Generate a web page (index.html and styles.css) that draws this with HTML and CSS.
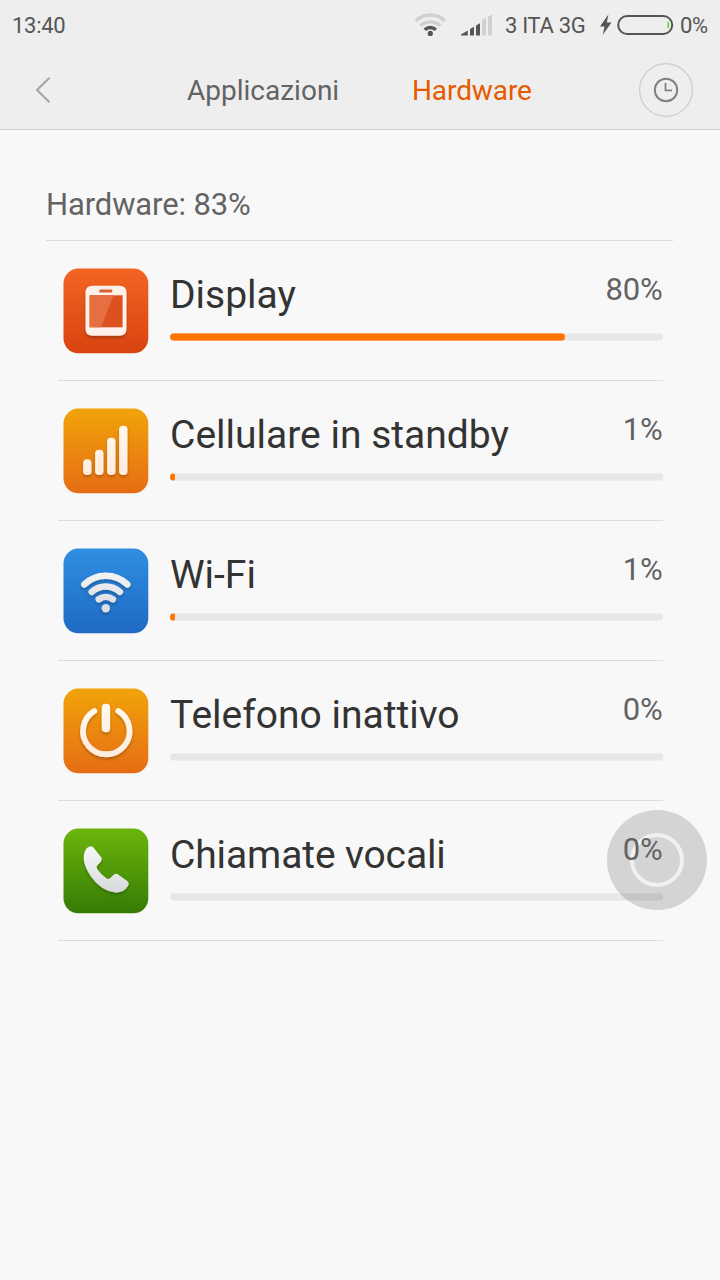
FILE: index.html
```html
<!DOCTYPE html>
<html lang="it">
<head>
<meta charset="utf-8">
<title>Hardware</title>
<link rel="stylesheet" href="styles.css">
</head>
<body>
<svg class="defs" width="0" height="0" aria-hidden="true">
  <defs>
    <linearGradient id="red" x2="0" y2="1"><stop stop-color="#f26522"/><stop offset="1" stop-color="#d84310"/></linearGradient>
    <linearGradient id="amber" x2="0" y2="1"><stop stop-color="#f2a30a"/><stop offset="1" stop-color="#e56d14"/></linearGradient>
    <linearGradient id="blue" x2="0" y2="1"><stop stop-color="#2f8fe2"/><stop offset="1" stop-color="#1e69c4"/></linearGradient>
    <linearGradient id="green" x2="0" y2="1"><stop stop-color="#6bb50c"/><stop offset="1" stop-color="#357c04"/></linearGradient>
    <linearGradient id="silver" gradientUnits="userSpaceOnUse" x1="0" y1="18" x2="0" y2="66"><stop stop-color="#f8f8f8"/><stop offset="1" stop-color="#d6d8da"/></linearGradient>
    <linearGradient id="cream" gradientUnits="userSpaceOnUse" x1="0" y1="15" x2="0" y2="70"><stop stop-color="#fff8f0"/><stop offset="1" stop-color="#fdebdc"/></linearGradient>
    <filter id="shadow" x="-20%" y="-20%" width="140%" height="150%"><feDropShadow dx="0" dy="2" stdDeviation="1.6" flood-color="#000" flood-opacity=".25"/></filter>
  </defs>
</svg>
<header class="top">
  <div class="status">
    <span class="time">13:40</span>
    <svg class="wifi" width="34" height="26" viewBox="0 0 34 26" fill="none" stroke-width="3.4">
      <path d="M1.8 9.8a21 21 0 0 1 29 0" stroke="#d0d0d0"/>
      <path d="M6.3 14.8a14.6 14.6 0 0 1 20 0" stroke="#d0d0d0"/>
      <path d="M10.7 18.7a8.4 8.4 0 0 1 11.2 0" stroke="#555"/>
      <circle cx="16.3" cy="22.4" r="2.6" fill="#555"/>
    </svg>
    <svg class="signal" width="32" height="22" viewBox="0 0 32 22">
      <path d="M0 21.5V20.5l6.8-4v5zM9 15l4-2.3v8.8H9zM15 11.6l4-2.4v12.3h-4z" fill="#555"/>
      <path d="M21 6.2l4-2.4v17.7h-4zM27 2.800l4-2.300v21h-4z" fill="#d0d0d0"/>
    </svg>
    <span class="carrier">3 ITA 3G</span>
    <svg class="battery" width="74" height="22" viewBox="0 0 74 22">
      <path d="M8.400.500L0 12.500h4.500L2.800 20.800 11.500 8.500H6.800z" fill="#555"/>
      <rect x="18.200" y="2" width="54" height="18" rx="9" fill="none" stroke="#555" stroke-width="2"/>
      <path d="M68.500 7.800q1.400 3.200 0 6.400h-1V8z" fill="#4fd41c"/>
    </svg>
    <span class="charge">0%</span>
  </div>
  <nav class="bar">
    <svg class="back" width="16" height="26" viewBox="0 0 16 26"><path d="M13.800 1.500L2 13l11.800 11.500" fill="none" stroke="#a6a6a6" stroke-width="2.200" stroke-linecap="round" stroke-linejoin="round"/></svg>
    <span class="tab tab-apps">Applicazioni</span>
    <span class="tab tab-hw">Hardware</span>
    <svg class="history" width="54" height="54" viewBox="0 0 54 54" fill="none">
      <circle cx="27" cy="27" r="26.400" stroke="#ccc" stroke-width="1.200"/>
      <circle cx="27" cy="27" r="11.200" stroke="#808080" stroke-width="2"/>
      <path d="M26.500 20v7.300H33" stroke="#808080" stroke-width="1.800"/>
    </svg>
  </nav>
</header>
<main class="content">
  <h1 class="heading">Hardware: 83%</h1>
  <ul class="list">
    <li class="row">
      <svg class="icon" viewBox="0 0 86 86"><rect x=".5" y=".5" width="84.800" height="84.800" rx="15" fill="url(#red)"/>
        <g filter="url(#shadow)"><path d="M29.500 17.700h27q7 0 7 7v36q0 7-7 7h-27q-7 0-7-7v-36q0-7 7-7z" fill="#fff1ea"/></g>
        <rect x="36.300" y="21.500" width="13" height="3" rx="1" fill="#d9602f"/>
        <rect x="26.600" y="27.300" width="33" height="32" fill="#dc511d"/>
        <path d="M26.600 27.300h24L38.100 59.300H26.600z" fill="#e66f42"/></svg>
      <div class="info"><div class="line"><span class="name">Display</span><span class="pct">80%</span></div><div class="track"><div class="fill" style="width:80.2%"></div></div></div>
    </li>
    <li class="row">
      <svg class="icon" viewBox="0 0 86 86"><rect x=".5" y=".5" width="84.800" height="84.800" rx="15" fill="url(#amber)"/>
        <g filter="url(#shadow)" fill="url(#cream)"><rect x="20.100" y="51.300" width="8.400" height="15.700" rx="3.800"/><rect x="32.100" y="41.800" width="8.400" height="25.200" rx="3.800"/><rect x="44.100" y="29.800" width="8.400" height="37.200" rx="3.800"/><rect x="56.100" y="17.800" width="8.400" height="49.200" rx="3.800"/></g></svg>
      <div class="info"><div class="line"><span class="name">Cellulare in standby</span><span class="pct">1%</span></div><div class="track"><div class="fill" style="width:1%"></div></div></div>
    </li>
    <li class="row">
      <svg class="icon" viewBox="0 0 86 86"><rect x=".5" y=".5" width="84.800" height="84.800" rx="15" fill="url(#blue)"/>
        <g filter="url(#shadow)" fill="none" stroke="url(#silver)" stroke-width="6.600" stroke-linecap="round"><path d="M21.300 36.400a31 31 0 0 1 43 0M28.800 43.900a21 21 0 0 1 28 0M35.800 51.200a12 12 0 0 1 14 0"/><circle cx="42.800" cy="60.200" r="4.200" fill="#dcdfe2" stroke="none"/></g></svg>
      <div class="info"><div class="line"><span class="name">Wi-Fi</span><span class="pct">1%</span></div><div class="track"><div class="fill" style="width:1%"></div></div></div>
    </li>
    <li class="row">
      <svg class="icon" viewBox="0 0 86 86"><rect x=".5" y=".5" width="84.800" height="84.800" rx="15" fill="url(#amber)"/>
        <g filter="url(#shadow)" fill="none" stroke="url(#cream)" stroke-linecap="round"><path d="M31.300 23a23.300 23.300 0 1 0 24 0" stroke-width="5.800"/><rect x="38.700" y="15.800" width="8.400" height="28.500" rx="4" fill="url(#cream)" stroke="none"/></g></svg>
      <div class="info"><div class="line"><span class="name">Telefono inattivo</span><span class="pct">0%</span></div><div class="track"></div></div>
    </li>
    <li class="row">
      <svg class="icon" viewBox="0 0 86 86"><rect x=".5" y=".5" width="84.800" height="84.800" rx="15" fill="url(#green)"/>
        <path transform="translate(-.8 -.4)" filter="url(#shadow)" d="M26.500 19.300Q29 17.600 31.200 20L39 29.600Q40.600 31.700 38.800 33.800L35 38Q33.700 39.600 35 41.500Q39 47.500 44.500 51Q46.300 52 47.800 50.600L51.500 47.200Q53.500 45.400 56 47L65 53.500Q67.500 55.500 66 58Q62 65.500 53 65Q39 63.500 29 49.500Q17.500 32.500 23.500 22Q24.500 20.200 26.500 19.300Z" fill="url(#silver)"/></svg>
      <div class="info"><div class="line"><span class="name name-calls">Chiamate vocali</span><span class="pct">0%</span></div><div class="track"></div></div>
    </li>
  </ul>
</main>
<div class="touch"><div class="ring"></div></div>
</body>
</html>
```
FILE: styles.css
```css
* { box-sizing: border-box; }
body { margin: 0; min-height: 1280px; background: #f8f8f8; font-family: Roboto, sans-serif; color: #636363; position: relative; }
svg { display: block; flex: none; }
.defs { position: absolute; }
.top { height: 130px; background: #eee; border-bottom: 1px solid #ccc; }
.status { display: flex; height: 50px; padding: 0 12px; font-size: 22px; line-height: 52px; color: #555; white-space: nowrap; letter-spacing: -.3px; }
.time { margin-right: auto; }
.wifi { margin-top: 11px; }
.signal { margin: 14px 12px 0 13px; }
.carrier { width: 82px; }
.battery { margin: 14px 6px 0 13px; }
.charge { width: 28px; }
.bar { display: flex; align-items: center; height: 80px; padding: 0 27px 0 35px; font-size: 28px; white-space: nowrap; }
.tab { line-height: 40px; padding-top: 2px; }
.tab-apps { margin-left: 136px; width: 153px; }
.tab-hw { margin-left: 72px; color: #e65a00; letter-spacing: -.1px; }
.history { margin-left: auto; }
.content { padding: 45px 47px 0 46px; }
.heading { margin: 0; height: 66px; border-bottom: 1px solid #ddd; font-size: 31px; font-weight: 400; line-height: 60px; letter-spacing: -.12px; }
.list { list-style: none; margin: 0; padding: 0 10px 0 12px; }
.row { display: flex; height: 140px; padding: 27px 0 0 5px; border-bottom: 1px solid #ddd; }
.icon { width: 86px; height: 86px; }
.info { flex: 1; margin-left: 21px; }
.line { display: flex; justify-content: space-between; height: 65px; }
.name { font-size: 39px; line-height: 54px; color: #333; }
.name-calls { letter-spacing: -.12px; }
.pct { font-size: 31px; line-height: 44px; letter-spacing: -.25px; margin-right: .6px; position: relative; z-index: 2; }
.track { height: 8px; border-radius: 4px; background: linear-gradient(#eee 1px, #e7e7e7 1px, #e7e7e7 7px, #eee 7px); overflow: hidden; }
.fill { height: 8px; border-radius: 4px; background: linear-gradient(#fba05a 1px, #ff7400 1px, #ff7400 7px, #fba05a 7px); }
.touch { position: absolute; left: 607px; top: 810px; width: 100px; height: 100px; border-radius: 50%; background: rgba(0,0,0,.145); display: grid; place-items: center; z-index: 1; }
.ring { width: 54px; height: 54px; border: 4px solid rgba(255,255,255,.68); border-radius: 50%; }
```
